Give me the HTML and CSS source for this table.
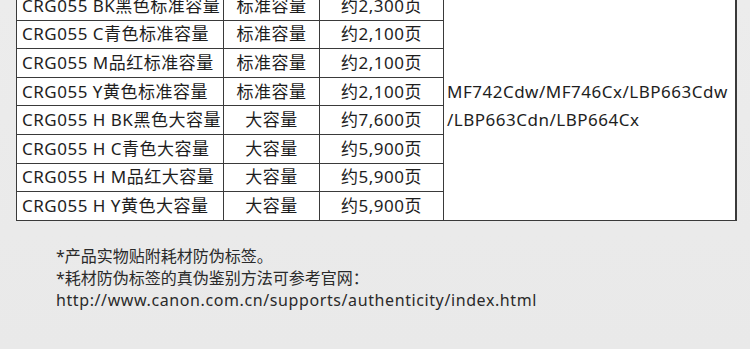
FILE: index.html
```html
<!DOCTYPE html>
<html lang="zh-CN">
<head>
<meta charset="utf-8">
<title>CRG055</title>
<link rel="stylesheet" href="styles.css">
</head>
<body>
<div class="page">
  <table class="spec">
    <colgroup>
      <col class="c1"><col class="c2"><col class="c3"><col class="c4">
    </colgroup>
    <tr>
      <td class="name">CRG055 BK黑色标准容量</td>
      <td class="mid">标准容量</td>
      <td class="mid">约2,300页</td>
      <td class="models" rowspan="8">MF742Cdw/MF746Cx/LBP663Cdw<br>/LBP663Cdn/LBP664Cx</td>
    </tr>
    <tr><td class="name">CRG055 C青色标准容量</td><td class="mid">标准容量</td><td class="mid">约2,100页</td></tr>
    <tr><td class="name">CRG055 M品红标准容量</td><td class="mid">标准容量</td><td class="mid">约2,100页</td></tr>
    <tr><td class="name">CRG055 Y黄色标准容量</td><td class="mid">标准容量</td><td class="mid">约2,100页</td></tr>
    <tr><td class="name">CRG055 H BK黑色大容量</td><td class="mid">大容量</td><td class="mid">约7,600页</td></tr>
    <tr><td class="name">CRG055 H C青色大容量</td><td class="mid">大容量</td><td class="mid">约5,900页</td></tr>
    <tr><td class="name">CRG055 H M品红大容量</td><td class="mid">大容量</td><td class="mid">约5,900页</td></tr>
    <tr><td class="name">CRG055 H Y黄色大容量</td><td class="mid">大容量</td><td class="mid">约5,900页</td></tr>
  </table>
  <div class="notes">
    <p>*产品实物贴附耗材防伪标签。</p>
    <p>*耗材防伪标签的真伪鉴别方法可参考官网：</p>
    <p class="url">http://www.canon.com.cn/supports/authenticity/index.html</p>
  </div>
</div>
</body>
</html>
```

FILE: styles.css
```css
html, body {
  margin: 0;
  padding: 0;
}
body {
  background: linear-gradient(180deg, #ececec 0%, #e9e9e9 100%);
  width: 750px;
  height: 349px;
  overflow: hidden;
}
.page {
  padding-left: 16px;
}
.spec {
  margin-top: -9px;
  border-collapse: collapse;
  background: #fff;
  font-family: "Noto Sans", "Noto Sans CJK SC", sans-serif;
  font-size: 17px;
  letter-spacing: 0.5px;
  color: #1e1e1e;
  table-layout: fixed;
  width: 720px;
}
.c1 { width: 207px; }
.c2 { width: 96px; }
.c3 { width: 124px; }
.c4 { width: 292px; }
.spec td {
  border: 1px solid #3a3a3a;
  height: 27.6px;
  padding: 0;
  line-height: 20px;
  white-space: nowrap;
  vertical-align: middle;
}
.spec td.name {
  padding-left: 5px;
}
.spec td.mid {
  text-align: center;
}
.spec td.models {
  padding-left: 3px;
  line-height: 28px;
  border-right-width: 2px;
}
.notes {
  margin-top: 24px;
  padding-left: 40px;
  font-family: "Noto Sans", "Noto Sans CJK SC", sans-serif;
  font-size: 16px;
  color: #2a2a2a;
  line-height: 22px;
}
.notes p {
  margin: 0;
}
.notes .url {
  letter-spacing: 0.6px;
}
```
